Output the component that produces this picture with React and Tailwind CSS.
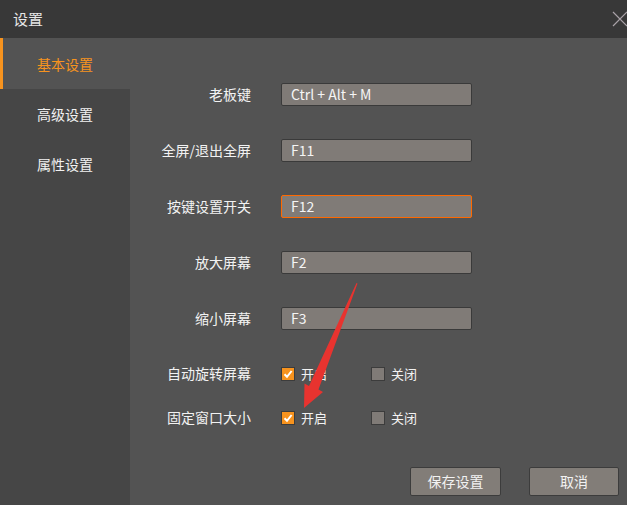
import React from 'react';

const font = { fontFamily: '"Microsoft YaHei", "Noto Sans CJK SC", "Noto Sans", sans-serif' };

function Check({ checked }) {
    return checked ? (
        <span className="w-[14px] h-[14px] bg-[#f7931e] border border-[#3c3c3c] flex items-center justify-center">
            <svg width="10" height="10" viewBox="0 0 10 10">
                <path d="M1.5 5.2 L4 7.8 L8.6 2" stroke="#fff" strokeWidth="2" fill="none" />
            </svg>
        </span>
    ) : (
        <span className="w-[14px] h-[14px] bg-[#807b77] border border-[#3c3c3c]" />
    );
}

export default function App() {
    const keys = [
        { label: '老板键', value: 'Ctrl + Alt + M', focus: false },
        { label: '全屏/退出全屏', value: 'F11', focus: false },
        { label: '按键设置开关', value: 'F12', focus: true },
        { label: '放大屏幕', value: 'F2', focus: false },
        { label: '缩小屏幕', value: 'F3', focus: false },
    ];
    const toggles = ['自动旋转屏幕', '固定窗口大小'];

    return (
        <div className="w-[627px] h-[505px] flex flex-col bg-[#535353] overflow-hidden relative" style={font}>
            {/* title bar */}
            <div className="h-[38px] bg-[#383838] flex items-center pl-[13px] text-[15px] text-[#e6e6e6] relative">
                设置
                <svg className="absolute left-[612px] top-[11px]" width="16" height="16" viewBox="0 0 16 16">
                    <path d="M1 1 L15 15 M15 1 L1 15" stroke="#a9a2a8" strokeWidth="1.2" />
                </svg>
            </div>

            <div className="flex flex-1">
                {/* sidebar */}
                <div className="w-[130px] flex flex-col">
                    <div className="h-[51px] bg-[#535353] border-l-[3px] border-[#f7931e] flex items-center pl-[34px] pt-[2px] text-[14px] text-[#f7931e]">基本设置</div>
                    <div className="flex-1 bg-[#464646] flex flex-col">
                        <div className="h-[50px] flex items-center pl-[37px] text-[14px] text-[#f2f2f2]">高级设置</div>
                        <div className="h-[50px] flex items-center pl-[37px] text-[14px] text-[#f2f2f2]">属性设置</div>
                    </div>
                </div>

                {/* form */}
                <div className="flex-1 flex flex-col pt-[45px]">
                    <div className="flex flex-col gap-[33px]">
                        {keys.map((k) => (
                            <div key={k.label} className="flex items-center h-[23px]">
                                <div className="w-[121px] text-right text-[14px] text-[#f2f2f2]">{k.label}</div>
                                <div className={k.focus ? 'ml-[30px] w-[191px] h-[23px] border border-orange-500 rounded-[2px] bg-[#807b77] flex items-center pl-[9px] text-[14px] text-[#f5f5f5]' : 'ml-[30px] w-[191px] h-[23px] border border-[#3a3a3a] rounded-[2px] bg-[#807b77] flex items-center pl-[9px] text-[14px] text-[#f5f5f5]'}>
                                    {k.value}
                                </div>
                            </div>
                        ))}
                    </div>

                    <div className="flex flex-col gap-[21px] mt-[32px]">
                        {toggles.map((t) => (
                            <div key={t} className="flex items-center h-[23px]">
                                <div className="w-[121px] text-right text-[14px] text-[#f2f2f2]">{t}</div>
                                <div className="ml-[30px] w-[90px] flex items-center gap-[6px] text-[13px] text-[#f2f2f2]">
                                    <Check checked />
                                    开启
                                </div>
                                <div className="flex items-center gap-[6px] text-[13px] text-[#f2f2f2]">
                                    <Check />
                                    关闭
                                </div>
                            </div>
                        ))}
                    </div>

                    <div className="flex justify-end gap-[28px] pr-[8px] mt-[38px]">
                        <button className="w-[91px] h-[29px] bg-[#827d78] border border-[#3c3c3c] rounded-[2px] text-[14px] text-[#f2f2f2]">保存设置</button>
                        <button className="w-[90px] h-[29px] bg-[#827d78] border border-[#3c3c3c] rounded-[2px] text-[14px] text-[#f2f2f2]">取消</button>
                    </div>
                </div>
            </div>

            {/* red annotation arrow */}
            <svg className="absolute left-0 top-0 pointer-events-none" width="627" height="505" viewBox="0 0 627 505">
                <path d="M356.5 283 L357.5 283.6 L318.5 389.5 L323 392 L304 408 L304.5 383.5 L309 386 Z" fill="#e8332f" />
            </svg>
        </div>
    );
}
